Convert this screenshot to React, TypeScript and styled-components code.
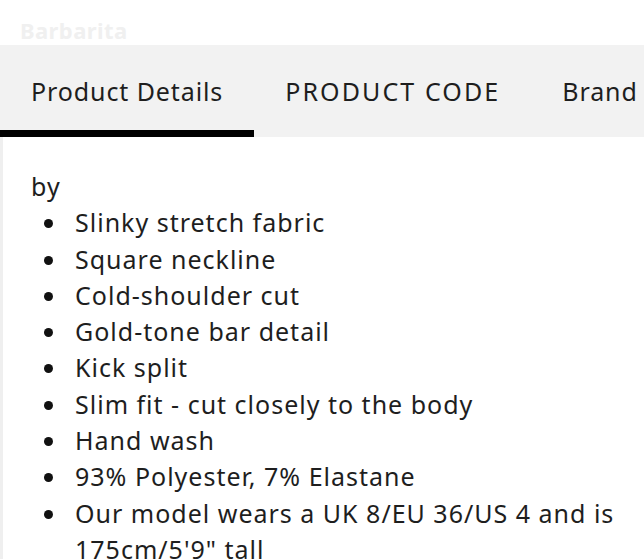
import React from "react";
import styled, { createGlobalStyle } from "styled-components";

const GlobalStyle = createGlobalStyle`
  html, body {
    margin: 0;
    padding: 0;
    background: #fff;
  }
  body {
    font-family: "Noto Sans", "DejaVu Sans", sans-serif;
    color: #1e1e1e;
  }
`;

const Page = styled.div`
  width: 644px;
  overflow: hidden;
`;

const Header = styled.div`
  height: 45px;
  box-sizing: border-box;
  padding: 19px 0 0 20px;
  font-size: 22px;
  line-height: 22px;
  letter-spacing: 0.4px;
  font-weight: 700;
  color: #f0f0f0;
`;

const TabBar = styled.div`
  display: flex;
  height: 92px;
  background: #f2f2f2;
  white-space: nowrap;
`;

const Tab = styled.div<{ $active?: boolean; $tracking?: number }>`
  display: flex;
  align-items: center;
  padding: 0 31px 0 31px;
  font-size: 25px;
  letter-spacing: ${(p) => p.$tracking ?? 0.9}px;
  color: #1e1e1e;
  box-shadow: ${(p) => (p.$active ? "inset 0 -7px 0 #000" : "none")};
`;

const Content = styled.div`
  border-left: 3px solid #efefef;
  padding: 31px 0 0 28px;
  font-size: 25px;
  letter-spacing: 1px;
  line-height: 36.3px;
`;

const List = styled.ul`
  list-style: none;
  margin: 0;
  padding: 0;
`;

const Item = styled.li`
  display: flex;
  align-items: flex-start;
`;

const Dot = styled.span`
  flex: none;
  width: 44px;
  height: 36.3px;
  position: relative;

  &::before {
    content: "";
    position: absolute;
    left: 13px;
    top: 15px;
    width: 9px;
    height: 9px;
    border-radius: 50%;
    background: #111;
  }
`;

const ItemText = styled.span`
  flex: 1;
  padding-right: 20px;
`;

const items = [
  "Slinky stretch fabric",
  "Square neckline",
  "Cold-shoulder cut",
  "Gold-tone bar detail",
  "Kick split",
  "Slim fit - cut closely to the body",
  "Hand wash",
  "93% Polyester, 7% Elastane",
  "Our model wears a UK 8/EU 36/US 4 and is 175cm/5'9\" tall",
];

export default function App() {
  return (
    <Page>
      <GlobalStyle />
      <Header>Barbarita</Header>
      <TabBar>
        <Tab $active>Product Details</Tab>
        <Tab $tracking={2.1}>PRODUCT CODE</Tab>
        <Tab>Brand</Tab>
      </TabBar>
      <Content>
        <div>by</div>
        <List>
          {items.map((t) => (
            <Item key={t}>
              <Dot />
              <ItemText>{t}</ItemText>
            </Item>
          ))}
        </List>
      </Content>
    </Page>
  );
}
